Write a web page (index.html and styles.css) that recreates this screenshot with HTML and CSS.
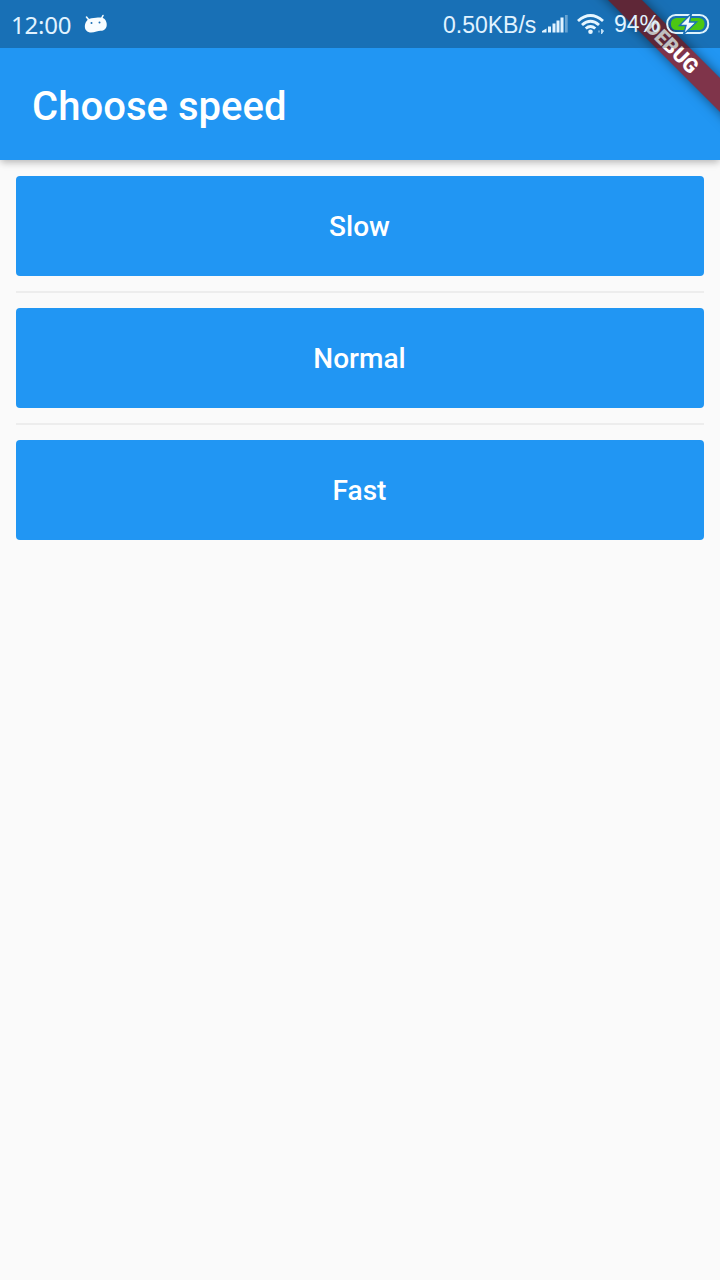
FILE: index.html
```html
<!DOCTYPE html>
<html lang="en">
<head>
<meta charset="utf-8">
<title>Choose speed</title>
<link rel="stylesheet" href="styles.css">
</head>
<body>
<div class="screen">
  <header class="app-bar"><h1 class="title">Choose speed</h1></header>
  <main class="choices">
    <button class="choice">Slow</button>
    <hr class="divider">
    <button class="choice">Normal</button>
    <hr class="divider">
    <button class="choice">Fast</button>
  </main>
  <div class="debug-corner"><div class="debug-banner">DEBUG</div></div>
  <div class="status-bar">
    <span class="clock">12:00</span>
    <svg class="android" width="24" height="20" viewBox="0 0 24 20">
      <path d="M4.500 5.500L2.500 3M17.500 4.500L19 1.500" stroke="#f4fcff" stroke-width="1.600" stroke-linecap="round"/>
      <path d="M3.500 6C6 3.800 9 4.300 12 3.800C15 3.300 19 2.800 21 5.500C23.500 9 23.500 14 20 16C17.500 17.500 15.500 16.300 12.500 17.500C8 19 4.500 19 2.300 16.500C0 14 .5 9 3.500 6Z" fill="#f8fdff"/>
      <circle cx="7.500" cy="9" r="1" fill="#1b70b7"/><circle cx="15.500" cy="8.500" r="1" fill="#1b70b7"/>
    </svg>
    <span class="spacer"></span>
    <span class="rate">0.50KB/s</span>
    <svg class="signal" width="26" height="20" viewBox="0 0 26 20" fill="#e1f3ff">
      <path d="M0 18.500V17L4.500 14.500V18.500ZM6 12.500h3v6H6ZM10.500 9.500h3v9h-3ZM14.500 6.500h3v12h-3ZM18.500 3.500h3v15h-3Z"/>
      <path d="M23 1h2.700v17.500H23Z" opacity=".4"/>
    </svg>
    <svg class="wifi" width="28" height="22" viewBox="0 0 28 22">
      <g fill="none" stroke="#e6f6ff" stroke-width="2.900">
        <path d="M1 8Q13.500 -3 26 8"/>
        <path d="M5 12Q13.500 4.500 22 12"/>
        <path d="M8.700 15.500Q13.500 11.500 18.300 15.500"/>
      </g>
      <circle cx="13.500" cy="18.700" r="2.300" fill="#e6f6ff"/>
      <path d="M24.500 16v5l2-3ZM22 17.500v2" fill="#c4e2f7" stroke="#c4e2f7" stroke-width=".9"/>
    </svg>
    <span class="percent">94%</span>
    <svg class="battery" width="44" height="22" viewBox="0 0 44 22">
      <rect x="1.200" y="2" width="41" height="18" rx="8.500" fill="none" stroke="#def3fc" stroke-width="2"/>
      <rect x="5" y="5" width="33.500" height="12" rx="5.500" fill="#4cc713"/>
      <path d="M25.500 .5L13.500 12.500H20L17.500 21.500L30.500 9H23.500Z" fill="#effbff" stroke="#1b70b7" stroke-width="1.400"/>
    </svg>
  </div>
</div>
</body>
</html>
```
FILE: styles.css
```css
* { box-sizing: border-box; }
body { margin: 0; }
.screen {
  position: relative;
  height: 1280px;
  overflow: hidden;
  background: #fafafa;
  font-family: Roboto, sans-serif;
}
.app-bar {
  height: 160px;
  padding: 48px 32px 0;
  display: flex;
  align-items: center;
  background: #2196f3;
  box-shadow: 0 3px 7px -1px rgba(0, 0, 0, .18), 0 2px 9px rgba(0, 0, 0, .13);
}
.title {
  margin: 0;
  padding-top: 5px;
  font-size: 40px;
  font-weight: 500;
  letter-spacing: .04px;
  color: #fff;
}
.choices {
  padding: 16px;
  display: flex;
  flex-direction: column;
}
.choice {
  height: 100px;
  padding: 0 1px 0 0;
  border: 0;
  border-radius: 4px;
  background: #2196f3;
  color: #fff;
  font: 500 28px Roboto, sans-serif;
}
.divider {
  width: 100%;
  height: 2px;
  margin: 15px 0;
  border: 0;
  background: #ededed;
}
.debug-corner {
  position: absolute;
  top: 0;
  right: 0;
  width: 180px;
  height: 180px;
  overflow: hidden;
}
.debug-banner {
  position: absolute;
  left: 33px;
  top: 36px;
  width: 200px;
  height: 24px;
  transform: rotate(45deg);
  background: #7f344a;
  box-shadow: 0 0 12px rgba(0, 0, 0, .5);
  color: #fff;
  font-size: 20.4px;
  font-weight: 900;
  line-height: 24px;
  text-align: center;
  text-indent: -3px;
}
.status-bar {
  position: absolute;
  inset: 0 0 auto;
  height: 48px;
  padding: 0 11px 0 11px;
  display: flex;
  align-items: center;
  background: rgba(0, 0, 0, .25);
  color: #e1f3ff;
  white-space: nowrap;
}
.clock {
  width: 61px;
  padding-top: 1px;
  font: 24px "Noto Sans", sans-serif;
  letter-spacing: -.2px;
}
.android { margin-left: 12px; }
.spacer { flex: 1; }
.rate {
  width: 100px;
  padding-top: 2px;
  font: 23px "Liberation Sans", sans-serif;
}
.signal { width: 26px; margin-left: -1px; }
.wifi { margin-left: 9px; }
.percent {
  width: 52px;
  padding-top: 1px;
  margin-left: 9px;
  font: 23px "Liberation Sans", sans-serif;
}
.battery { margin-right: -1px; }
```
